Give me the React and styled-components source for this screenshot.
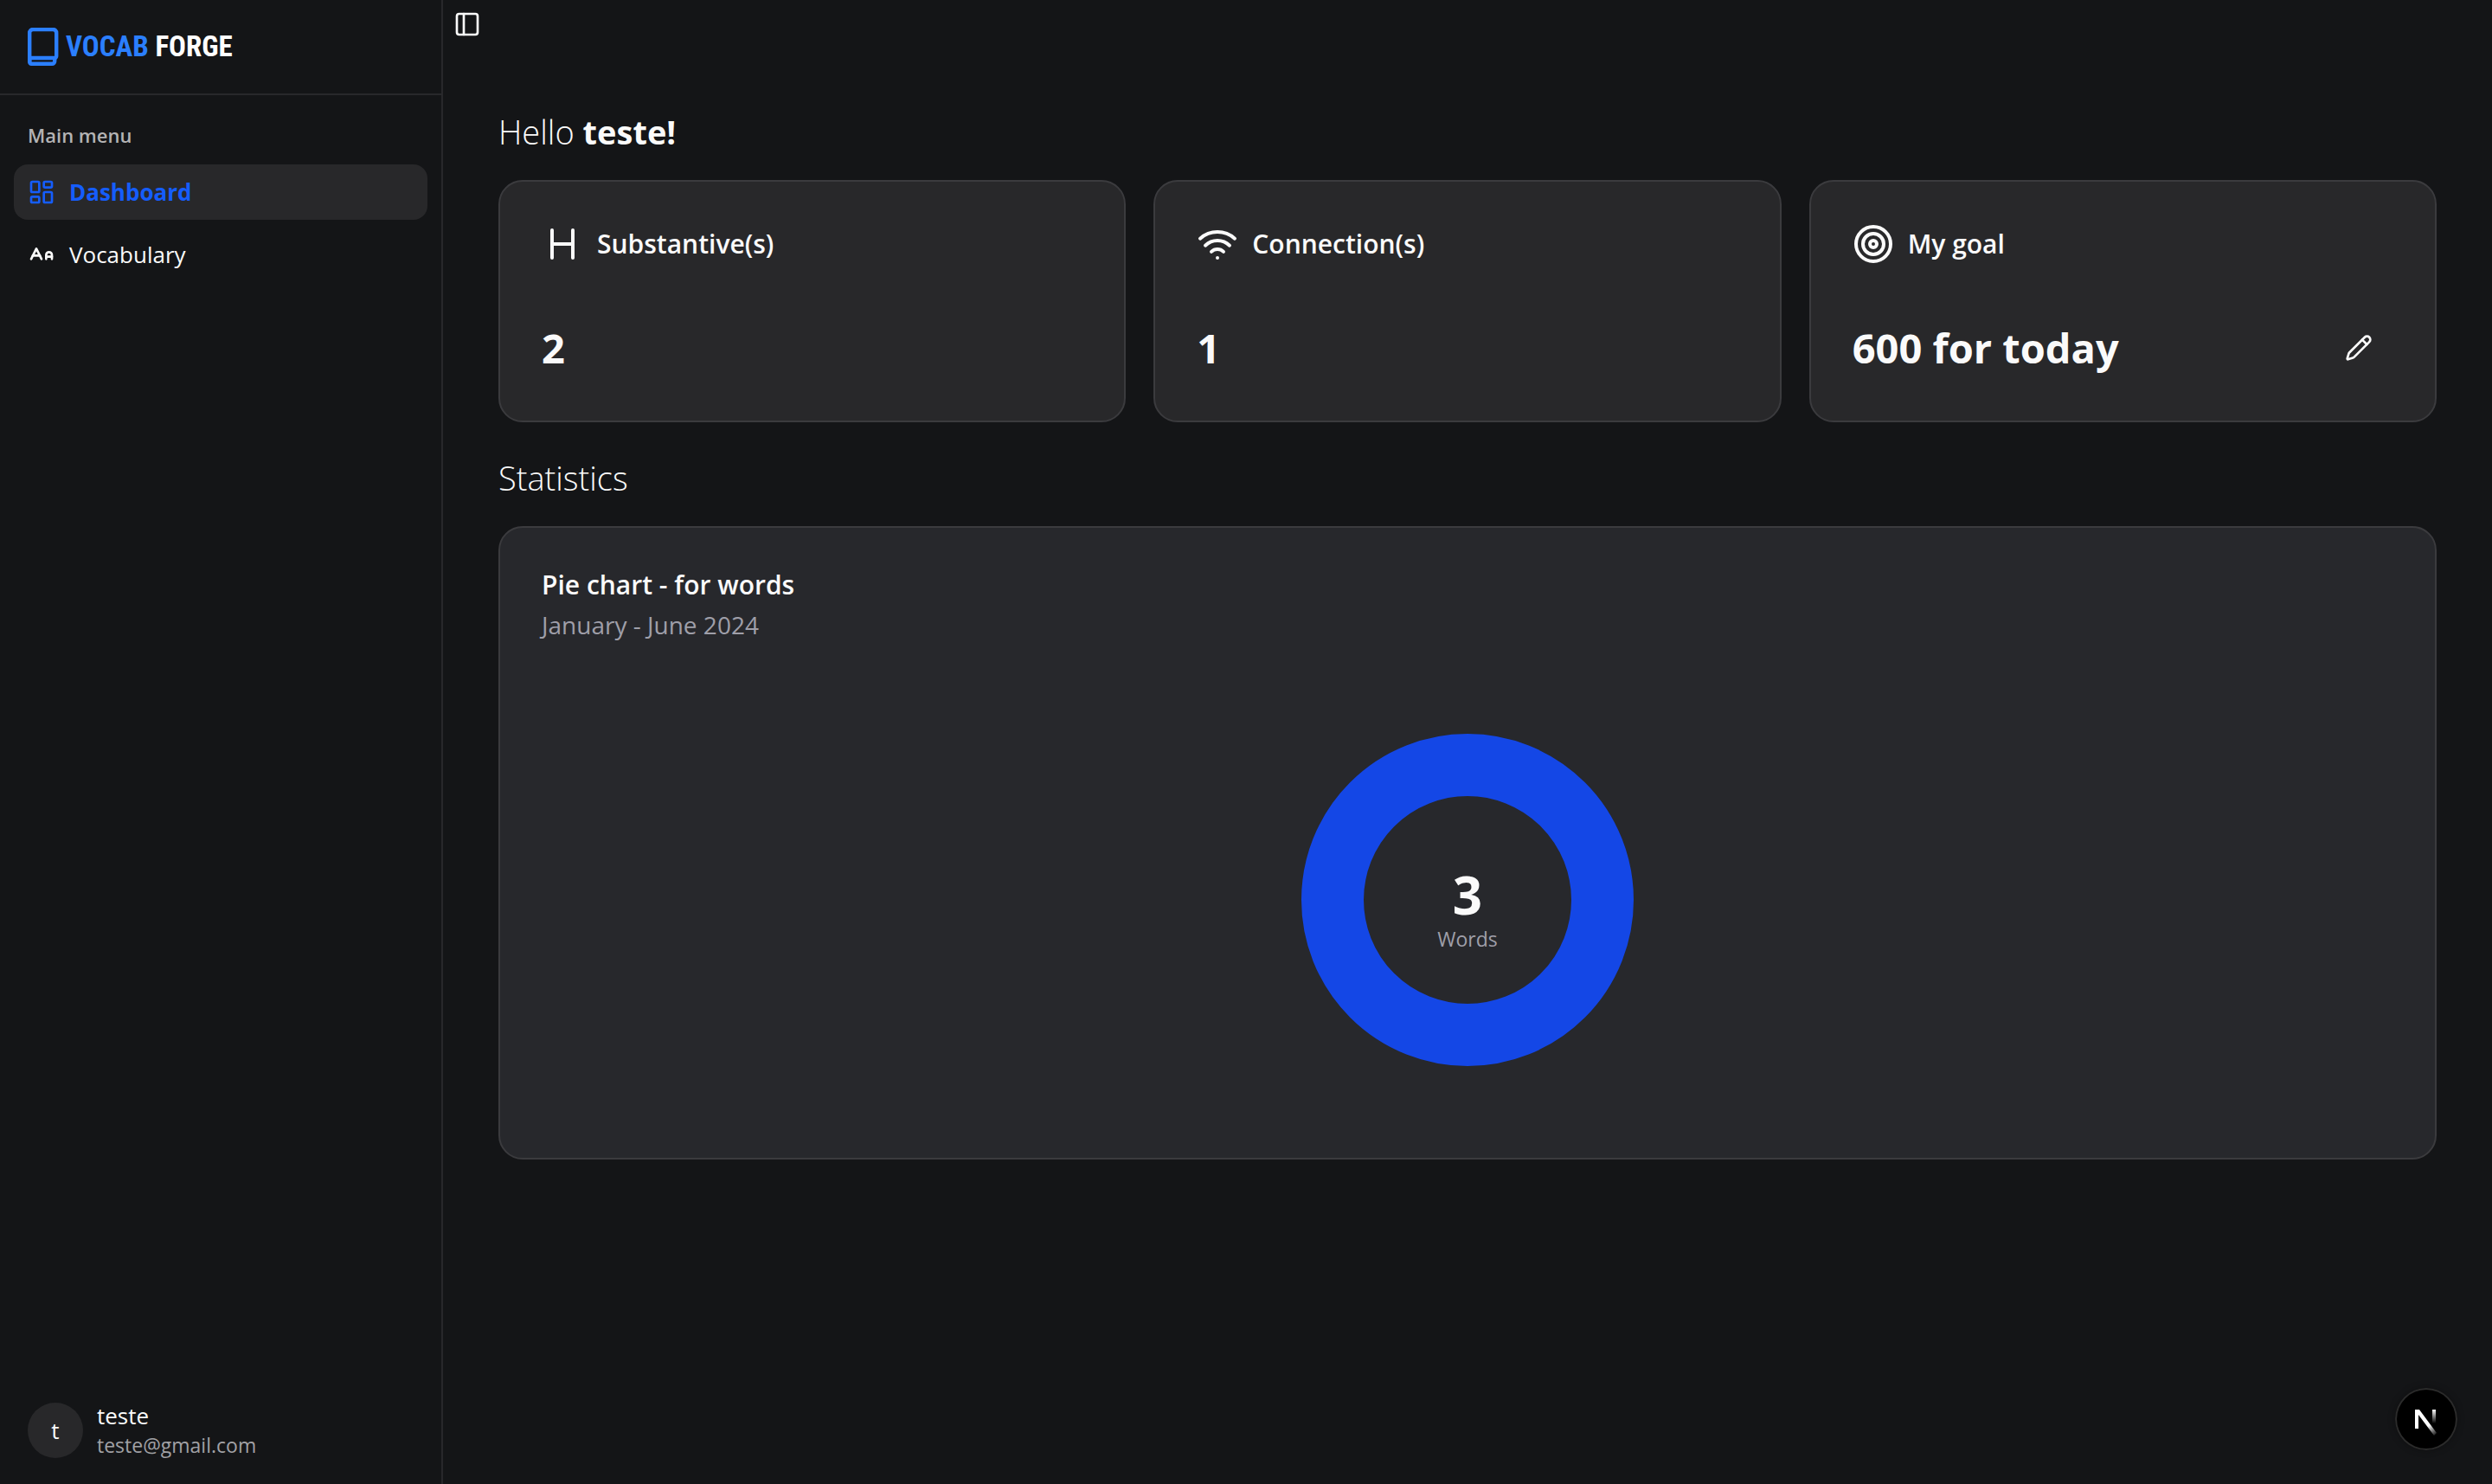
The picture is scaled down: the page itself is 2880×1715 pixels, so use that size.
import React from "react";
import styled, { createGlobalStyle } from "styled-components";
import { Heading, Wifi, Target, Pencil, PanelLeft, LayoutDashboard } from "lucide-react";

const GlobalStyle = createGlobalStyle`
  * { box-sizing: border-box; }
  body { margin: 0; background: #141517; color: #fafafa; font-family: "Open Sans", "Noto Sans", sans-serif; }
  h1, h2, h3, p { margin: 0; font-weight: inherit; font-size: inherit; }
  button { border: 0; padding: 0; background: none; color: inherit; font: inherit; cursor: pointer; }
`;

const Shell = styled.div`
  display: grid;
  grid-template-columns: 512px minmax(0, 1fr);
  min-height: 100vh;
`;

const Sidebar = styled.aside`
  display: flex;
  flex-direction: column;
  border-right: 2px solid #28282b;
`;

const Brand = styled.a`
  display: flex;
  align-items: center;
  gap: 8px;
  height: 110px;
  padding: 0 32px;
  border-bottom: 2px solid #28282b;
  color: #fff;
  font: 700 33px/44px "Roboto Condensed", "Noto Sans CJK JP", sans-serif;
  text-decoration: none;
  em { color: #2b7fff; font-style: normal; }
  svg { width: 36px; height: 44px; flex: none; }
`;

const Menu = styled.nav`
  display: flex;
  flex-direction: column;
  gap: 8px;
  flex: 1;
  padding: 20px 16px;
`;

const MenuLabel = styled.h2`
  padding: 0 16px;
  color: #b3b3b4;
  font-size: 22px;
  font-weight: 600;
  line-height: 52px;
`;

const MenuItem = styled.a`
  display: flex;
  align-items: center;
  gap: 16px;
  height: 64px;
  padding: 0 16px;
  border-radius: 16px;
  background: ${(p) => (p.$active ? "#28282a" : "transparent")};
  color: ${(p) => (p.$active ? "#155dfc" : "#fafafa")};
  font-size: 26px;
  font-weight: ${(p) => (p.$active ? 700 : 400)};
  text-decoration: none;
`;

const Account = styled.button`
  display: flex;
  align-items: center;
  gap: 16px;
  padding: 16px 32px 28px;
  text-align: left;
`;

const Avatar = styled.span`
  display: grid;
  place-items: center;
  width: 64px;
  height: 64px;
  border-radius: 50%;
  background: #28282a;
  font-size: 26px;
`;

const AccountText = styled.span`
  display: grid;
  font-size: 26px;
  line-height: 34px;
  small { color: #a1a1a5; font-size: 23px; }
`;

const Page = styled.main`
  display: flex;
  flex-direction: column;
`;

const Toggle = styled.button`
  display: grid;
  place-items: center;
  width: 56px;
  height: 56px;
`;

const Content = styled.div`
  display: flex;
  flex-direction: column;
  gap: 32px;
  padding: 64px;
`;

const Section = styled.section`
  display: flex;
  flex-direction: column;
  gap: 24px;
`;

const Title = styled.h1`
  font-size: 38px;
  font-weight: 350;
  line-height: 64px;
  strong { font-weight: 700; }
`;

const Cards = styled.div`
  display: grid;
  grid-template-columns: repeat(3, minmax(0, 1fr));
  gap: 32px;
`;

const Card = styled.article`
  display: flex;
  flex-direction: column;
  padding: 48px;
  border: 2px solid #3b3b3e;
  border-radius: 28px;
  background: ${(p) => (p.$chart ? "#27282c" : "#28282a")};
`;

const CardHead = styled.header`
  display: flex;
  align-items: center;
  gap: 16px;
  margin-bottom: 60px;
`;

const CardTitle = styled.h3`
  font-size: 30px;
  font-weight: 600;
  line-height: 36px;
`;

const CardValue = styled.div`
  display: flex;
  align-items: center;
  justify-content: space-between;
  height: 72px;
  font-size: 47px;
  font-weight: 700;
`;

const EditButton = styled.button`
  display: grid;
  place-items: center;
  width: 80px;
  height: 72px;
`;

const Period = styled.p`
  color: #9f9fa9;
  font-size: 28px;
  line-height: 56px;
`;

const Chart = styled.figure`
  display: grid;
  place-items: center;
  margin: 40px 0 0;
  svg { width: 500px; height: 500px; }
`;

const DevBadge = styled.button`
  position: fixed;
  right: 40px;
  bottom: 39px;
  width: 72px;
  height: 72px;
  border-radius: 50%;
  background: #000;
  box-shadow: inset 0 0 0 2px #2b2b2b, 0 0 8px rgba(0, 0, 0, 0.3);
  svg { display: block; }
`;

const BookLogo = () => (
  <svg viewBox="0 0 36 44" fill="none" stroke="#2b7fff" strokeWidth="4.4" aria-hidden="true">
    <path d="M2.2 40V6a4 4 0 0 1 4-4h23a4 4 0 0 1 4 4v27a2 2 0 0 1-2 2H4" />
    <path d="M2.2 36v3.800a2 2 0 0 0 2 2h24a3 3 0 0 0 3-3v-4" />
  </svg>
);

const LettersIcon = () => (
  <svg width="32" height="32" viewBox="0 0 24 24" fill="none" stroke="currentColor" strokeWidth="2" strokeLinecap="round" strokeLinejoin="round" aria-hidden="true">
    <path d="M21 14h-5" />
    <path d="M16 16v-3.500a2.500 2.500 0 0 1 5 0V16" />
    <path d="M4.500 13h6" />
    <path d="m3 16 4.500-9 4.500 9" />
  </svg>
);

const NextMark = () => (
  <svg width="72" height="72" viewBox="0 0 72 72" fill="none" aria-hidden="true">
    <defs>
      <linearGradient id="diag" x1="38" y1="44" x2="47" y2="56" gradientUnits="userSpaceOnUse">
        <stop stopColor="#fff" />
        <stop offset="1" stopColor="#fff" stopOpacity="0" />
      </linearGradient>
      <linearGradient id="stem" x1="44" y1="25" x2="44" y2="41" gradientUnits="userSpaceOnUse">
        <stop stopColor="#fff" />
        <stop offset="1" stopColor="#fff" stopOpacity="0" />
      </linearGradient>
    </defs>
    <path d="M23 25h5l20 27-3 3-18-24v16h-4z" fill="url(#diag)" />
    <path d="M43 25h4v16h-4z" fill="url(#stem)" />
  </svg>
);

export default function App() {
  return (
    <>
      <GlobalStyle />
      <Shell>
        <Sidebar>
          <Brand href="#">
            <BookLogo />
            <span><em>VOCAB</em> FORGE</span>
          </Brand>
          <Menu aria-label="Main menu">
            <MenuLabel>Main menu</MenuLabel>
            <MenuItem href="#dashboard" $active><LayoutDashboard size={32} />Dashboard</MenuItem>
            <MenuItem href="#vocabulary"><LettersIcon />Vocabulary</MenuItem>
          </Menu>
          <Account>
            <Avatar>t</Avatar>
            <AccountText>teste<small>teste@gmail.com</small></AccountText>
          </Account>
        </Sidebar>
        <Page>
          <Toggle aria-label="Toggle sidebar"><PanelLeft size={32} /></Toggle>
          <Content>
            <Section>
              <Title>Hello <strong>teste!</strong></Title>
              <Cards>
                <Card>
                  <CardHead><Heading size={48} /><CardTitle>Substantive(s)</CardTitle></CardHead>
                  <CardValue>2</CardValue>
                </Card>
                <Card>
                  <CardHead><Wifi size={48} /><CardTitle>Connection(s)</CardTitle></CardHead>
                  <CardValue>1</CardValue>
                </Card>
                <Card>
                  <CardHead><Target size={48} /><CardTitle>My goal</CardTitle></CardHead>
                  <CardValue>600 for today<EditButton aria-label="Edit goal"><Pencil size={32} /></EditButton></CardValue>
                </Card>
              </Cards>
            </Section>
            <Section>
              <Title as="h2">Statistics</Title>
              <Card $chart>
                <CardTitle>Pie chart - for words</CardTitle>
                <Period>January - June 2024</Period>
                <Chart>
                  <svg viewBox="0 0 500 500" role="img" aria-label="3 words">
                    <circle cx="250" cy="250" r="156" fill="none" stroke="#1447e6" strokeWidth="72" />
                    <text x="250" y="267" textAnchor="middle" fill="#fafafa" fontSize="60" fontWeight="700">3</text>
                    <text x="250" y="304" textAnchor="middle" fill="#9f9fa9" fontSize="23">Words</text>
                  </svg>
                </Chart>
              </Card>
            </Section>
          </Content>
        </Page>
      </Shell>
      <DevBadge aria-label="Open developer tools"><NextMark /></DevBadge>
    </>
  );
}
